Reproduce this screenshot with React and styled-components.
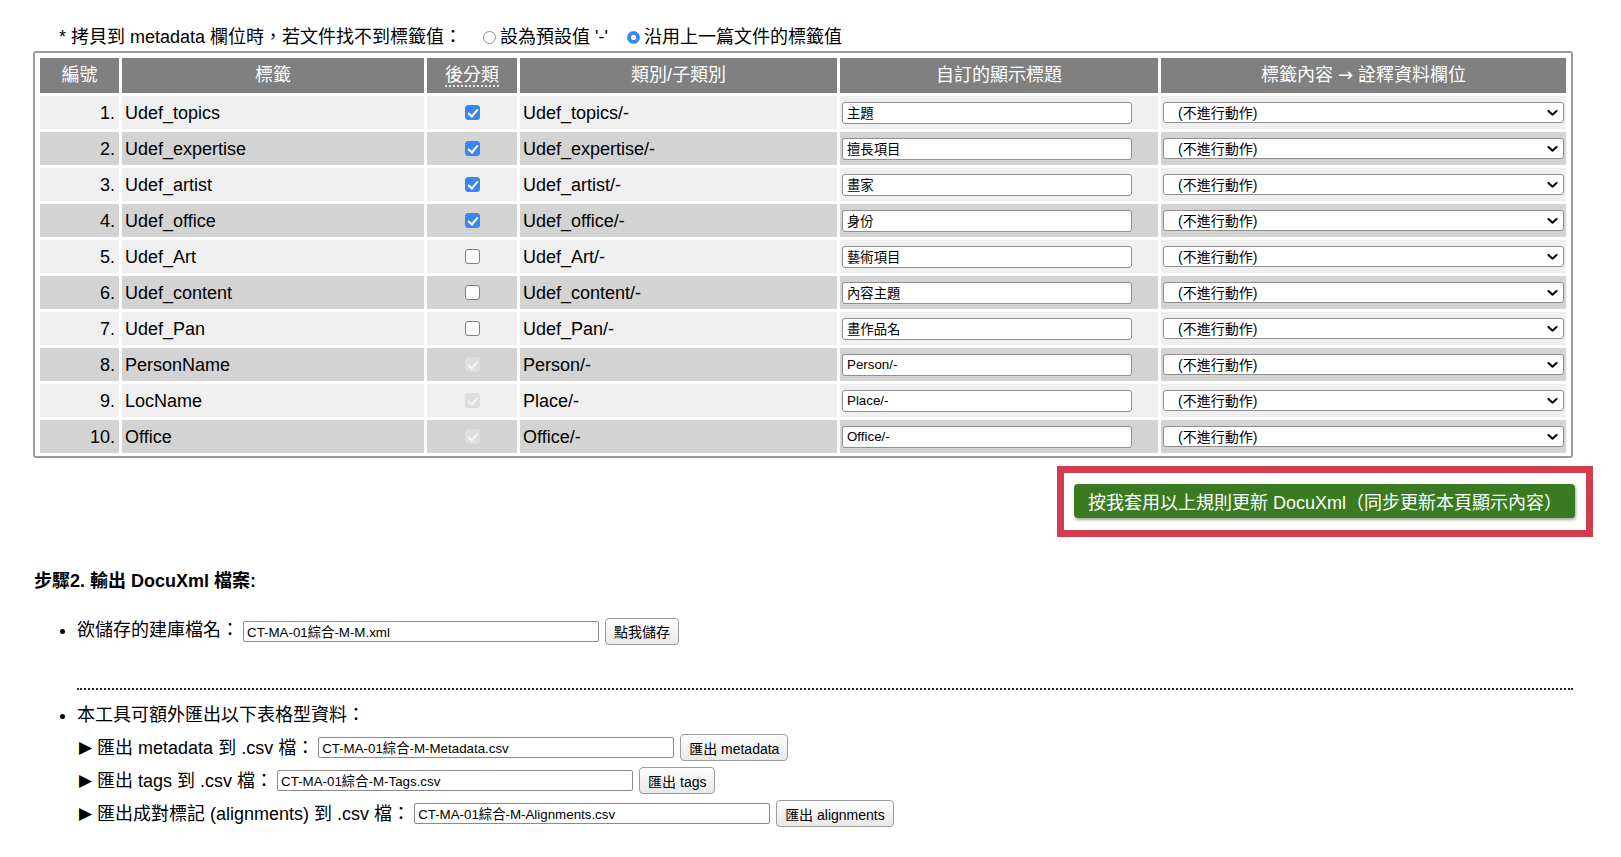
import styled, { createGlobalStyle, css } from 'styled-components';

const FONT = `"Liberation Sans", "Noto Sans CJK TC", sans-serif`;

const GlobalStyle = createGlobalStyle`
  html, body {
    margin: 0;
    padding: 0;
    background: #fff;
  }
  body {
    font-family: ${FONT};
    color: #000;
  }
`;

const Page = styled.div`
  padding: 24px 48px 40px 33px;
  font-size: 18px;
`;

const Notice = styled.div`
  height: 26px;
  line-height: 26px;
  margin: 0 0 1px 26px;
  white-space: nowrap;
`;

const Radio = styled.input.attrs({ type: 'radio' })`
  appearance: none;
  width: 13px;
  height: 13px;
  margin: 0 4px 0 ${p => p.$gap || 6}px;
  border: 1px solid #8e8e8e;
  border-radius: 50%;
  background: #fff;
  vertical-align: -1px;
  &:checked {
    border-color: #3a86f5;
    background: radial-gradient(circle, #fff 0 2.4px, #3a86f5 3px);
  }
`;

const Frame = styled.div`
  border: 2px solid #9a9a9a;
  border-radius: 3px;
  padding: 2px 2px 0 2px;
`;

const Grid = styled.table`
  width: 100%;
  table-layout: fixed;
  border-collapse: separate;
  border-spacing: 3px;
`;

const Head = styled.th`
  height: 33px;
  padding: 0 0 2px;
  background: #808080;
  color: #fff;
  font-weight: normal;
  font-size: 18px;
  line-height: 24px;
  text-align: center;
`;

const Abbr = styled.span`
  text-decoration: underline dotted #f2f2f2;
  text-underline-offset: 5px;
`;

const Arrow = styled.span`
  font-family: "DejaVu Sans", sans-serif;
  font-size: ${p => p.$size || 18}px;
  line-height: 1;
  margin: ${p => p.$margin || '0'};
`;

const Cell = styled.td`
  height: 33px;
  padding: 0 3px;
  font-size: 18px;
  line-height: 24px;
  white-space: nowrap;
  background: ${p => (p.$alt ? '#d3d3d3' : '#efefef')};
  text-align: ${p => p.$align || 'left'};
  ${p => p.$align === 'right' && css`padding-right: 4px;`}
`;

const Check = styled.input.attrs({ type: 'checkbox' })`
  appearance: none;
  position: relative;
  width: 15px;
  height: 15px;
  margin: 0 0 2px;
  vertical-align: middle;
  border: 1px solid #7d7d7d;
  border-radius: 3px;
  background: #fff;
  &:checked {
    border-color: #3a86f5;
    background: #3a86f5;
  }
  &:checked::after {
    content: '';
    position: absolute;
    left: 4px;
    top: 1px;
    width: 4px;
    height: 8px;
    border: solid #fff;
    border-width: 0 2px 2px 0;
    transform: rotate(40deg);
  }
  &:disabled {
    border-color: #dedede;
    background: #dedede;
  }
  &:disabled:checked::after {
    border-color: #f4f4f4;
  }
`;

const TitleField = styled.input`
  display: block;
  box-sizing: border-box;
  width: 290px;
  height: 22px;
  margin-left: -1px;
  padding: 0 4px;
  border: 1px solid #8e8e8e;
  border-radius: 3px;
  background: #fff;
  font-family: ${FONT};
  font-size: 13.333px;
  color: #000;
`;

const SelectBox = styled.span`
  position: relative;
  display: block;
  margin: 0 -1px;
`;

const Select = styled.select`
  appearance: none;
  display: block;
  box-sizing: border-box;
  width: 100%;
  height: 21px;
  padding: 0 0 0 14px;
  border: 1px solid #8e8e8e;
  border-radius: 3px;
  background: #fff;
  font-family: ${FONT};
  font-size: 14px;
  color: #000;
`;

const Chevron = styled.svg`
  position: absolute;
  right: 6px;
  top: 50%;
  transform: translateY(-50%);
  pointer-events: none;
`;

const ActionRow = styled.div`
  display: flex;
  justify-content: flex-end;
  margin: 26px -2px 0 0;
`;

const Highlight = styled.div`
  position: relative;
  &::before {
    content: '';
    position: absolute;
    top: -18px;
    left: -17px;
    right: -18px;
    bottom: -19px;
    border: 7px solid #d23c50;
    pointer-events: none;
  }
`;

const ApplyButton = styled.button`
  display: block;
  height: 34px;
  padding: 0 13px 0 14px;
  border: none;
  border-radius: 4px;
  background: #3a7b22;
  color: #fff;
  font-family: ${FONT};
  font-size: 18px;
  box-shadow: 1px 2px 3px rgba(0, 0, 0, 0.35);
`;

const StepTitle = styled.h3`
  margin: 51px 0 0 1px;
  font-size: 18px;
  line-height: 24px;
  font-weight: bold;
`;

const StepList = styled.ul`
  margin: ${p => p.$top}px 0 0 0;
  padding-left: 44px;
  list-style: disc;
`;

const Item = styled.li`
  line-height: ${p => p.$lh}px;
  white-space: nowrap;
`;

const Divider = styled.hr`
  margin: 43px 0 0 44px;
  border: none;
  border-top: 2px dotted #2a2a2a;
  height: 0;
`;

const ExportLine = styled.div`
  display: flex;
  align-items: center;
  height: 33px;
  margin-left: 2px;
  white-space: pre;
  &:first-of-type {
    margin-top: 4px;
  }
`;

const FileInput = styled.input`
  box-sizing: border-box;
  width: 356px;
  height: 21px;
  margin: 0 0 0 4px;
  padding: 0 3px;
  border: 1px solid #8a8a8a;
  border-radius: 2px;
  background: #fff;
  font-family: ${FONT};
  font-size: 13.333px;
  color: #000;
  vertical-align: middle;
`;

const FileButton = styled.button`
  height: 27px;
  margin: 0 0 0 6px;
  padding: 0 8px;
  border: 1px solid #9b9b9b;
  border-radius: 4px;
  background: linear-gradient(#fdfdfd, #e9e9e9);
  font-family: ${FONT};
  font-size: 14px;
  color: #000;
  vertical-align: middle;
`;

const rows = [
  ['Udef_topics', 'Udef_topics/-', '主題', 'on'],
  ['Udef_expertise', 'Udef_expertise/-', '擅長項目', 'on'],
  ['Udef_artist', 'Udef_artist/-', '畫家', 'on'],
  ['Udef_office', 'Udef_office/-', '身份', 'on'],
  ['Udef_Art', 'Udef_Art/-', '藝術項目', 'off'],
  ['Udef_content', 'Udef_content/-', '內容主題', 'off'],
  ['Udef_Pan', 'Udef_Pan/-', '畫作品名', 'off'],
  ['PersonName', 'Person/-', 'Person/-', 'locked'],
  ['LocName', 'Place/-', 'Place/-', 'locked'],
  ['Office', 'Office/-', 'Office/-', 'locked'],
];

const exportsList = [
  ['匯出 metadata 到 .csv 檔：', 'CT-MA-01綜合-M-Metadata.csv', '匯出 metadata'],
  ['匯出 tags 到 .csv 檔：', 'CT-MA-01綜合-M-Tags.csv', '匯出 tags'],
  ['匯出成對標記 (alignments) 到 .csv 檔：', 'CT-MA-01綜合-M-Alignments.csv', '匯出 alignments'],
];

function TagRow({ index, row }) {
  const [tag, category, title, state] = row;
  const alt = index % 2 === 1;
  return (
    <tr>
      <Cell $alt={alt} $align="right">{index + 1}.</Cell>
      <Cell $alt={alt}>{tag}</Cell>
      <Cell $alt={alt} $align="center">
        <Check defaultChecked={state !== 'off'} disabled={state === 'locked'} />
      </Cell>
      <Cell $alt={alt}>{category}</Cell>
      <Cell $alt={alt}>
        <TitleField defaultValue={title} />
      </Cell>
      <Cell $alt={alt}>
        <SelectBox>
          <Select defaultValue="none">
            <option value="none">(不進行動作)</option>
          </Select>
          <Chevron width="11" height="7" viewBox="0 0 11 7">
            <polyline points="1.5,1.5 5.5,5.2 9.5,1.5" fill="none" stroke="#111" strokeWidth="2.2" strokeLinecap="round" strokeLinejoin="round" />
          </Chevron>
        </SelectBox>
      </Cell>
    </tr>
  );
}

export default function App() {
  return (
    <Page>
      <GlobalStyle />
      <Notice>
        * 拷貝到 metadata 欄位時，若文件找不到標籤值： <Radio name="fill" $gap={16} />設為預設值 '-' <Radio name="fill" $gap={14} defaultChecked />沿用上一篇文件的標籤值
      </Notice>

      <Frame>
        <Grid>
          <colgroup>
            <col style={{ width: 79 }} />
            <col style={{ width: 302 }} />
            <col style={{ width: 90 }} />
            <col style={{ width: 317 }} />
            <col style={{ width: 318 }} />
            <col />
          </colgroup>
          <thead>
            <tr>
              <Head>編號</Head>
              <Head>標籤</Head>
              <Head><Abbr>後分類</Abbr></Head>
              <Head>類別/子類別</Head>
              <Head>自訂的顯示標題</Head>
              <Head>標籤內容 <Arrow>→</Arrow> 詮釋資料欄位</Head>
            </tr>
          </thead>
          <tbody>
            {rows.map((row, i) => (
              <TagRow key={row[0]} index={i} row={row} />
            ))}
          </tbody>
        </Grid>
      </Frame>

      <ActionRow>
        <Highlight>
          <ApplyButton>按我套用以上規則更新 DocuXml（同步更新本頁顯示內容）</ApplyButton>
        </Highlight>
      </ActionRow>

      <StepTitle>步驟2. 輸出 DocuXml 檔案:</StepTitle>
      <StepList $top={22}>
        <Item $lh={30}>
          欲儲存的建庫檔名：<FileInput defaultValue="CT-MA-01綜合-M-M.xml" />
          <FileButton>點我儲存</FileButton>
        </Item>
      </StepList>

      <Divider />

      <StepList $top={13}>
        <Item $lh={24}>
          本工具可額外匯出以下表格型資料：
          {exportsList.map(([label, file, action]) => (
            <ExportLine key={action}>
              <Arrow $size={17} $margin="0 5px 0 0">▶</Arrow>
              {label}
              <FileInput defaultValue={file} />
              <FileButton>{action}</FileButton>
            </ExportLine>
          ))}
        </Item>
      </StepList>
    </Page>
  );
}
